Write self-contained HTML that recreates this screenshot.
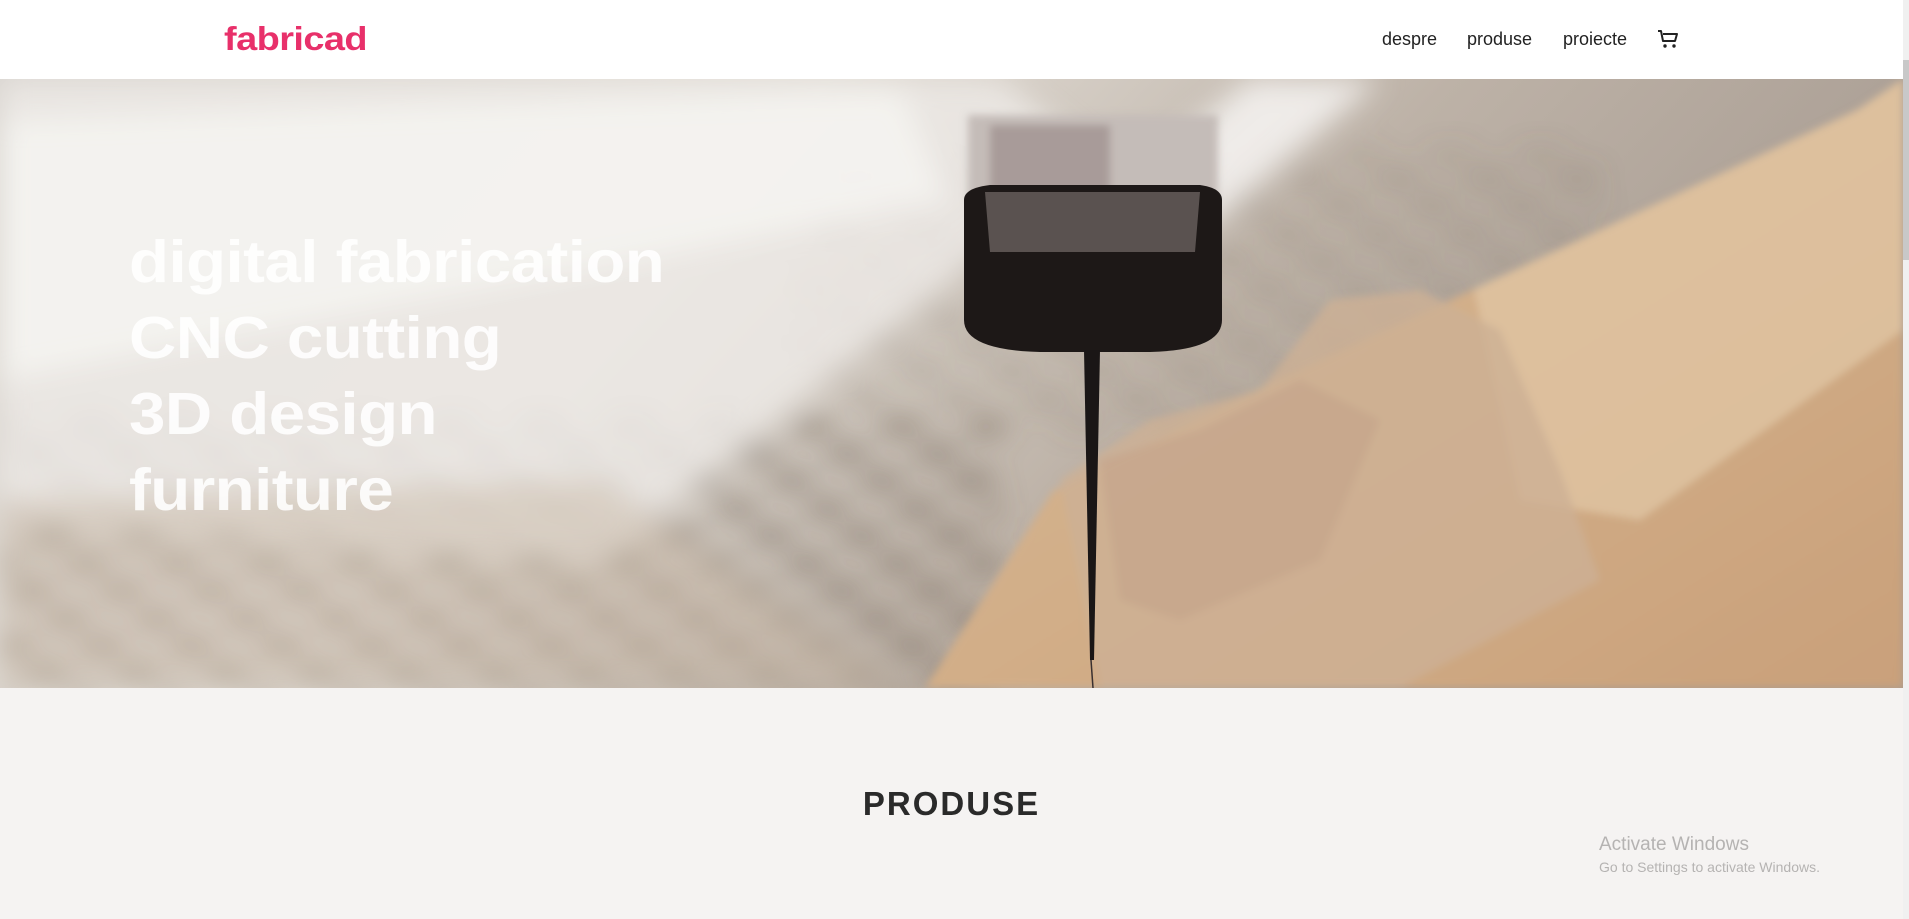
<!DOCTYPE html>
<html><head><meta charset="utf-8"><style>
html,body{margin:0;padding:0;width:1909px;height:919px;overflow:hidden;background:#f5f3f2;font-family:"Liberation Sans",sans-serif}
.hdr{position:absolute;left:0;top:0;width:1903px;height:79px;background:#fff}
.logo{position:absolute;left:224px;top:20px;font-size:33px;font-weight:bold;color:#e8306a;letter-spacing:-0.5px;transform:scaleX(1.15);transform-origin:0 0}
.nav{position:absolute;top:29px;font-size:18px;color:#222}
.hero{position:absolute;left:0;top:79px;width:1903px;height:609px;overflow:hidden}
.ht{position:absolute;left:129px;top:145px;font-size:59px;font-weight:bold;color:rgba(255,255,255,0.88);line-height:76px;letter-spacing:-0.5px;transform:scaleX(1.11);transform-origin:0 0}
.sb{position:absolute;right:0;top:0;width:6px;height:919px;background:#f0f0f0}
.sb div{position:absolute;left:0;top:60px;width:6px;height:200px;background:#c8c8c8}
.prod{position:absolute;left:0;width:1903px;top:785px;text-align:center;font-size:33px;font-weight:bold;color:#2a2a2a;letter-spacing:2px}
.win{position:absolute;left:1599px;top:834px;color:#b5b3b2;font-size:19px}
.win2{position:absolute;left:1599px;top:859px;color:#b5b3b2;font-size:14px}
</style></head><body>
<div class="hdr">
<div class="logo">fabricad</div>
<div class="nav" style="left:1382px">despre</div>
<div class="nav" style="left:1467px">produse</div>
<div class="nav" style="left:1563px">proiecte</div>
<svg style="position:absolute;left:1657px;top:29px" width="22" height="20" viewBox="0 0 22 20"><path d="M1 2h3l2 10h12l2-7H6" fill="none" stroke="#222" stroke-width="2" stroke-linejoin="round"/><circle cx="8" cy="17" r="1.7" fill="#222"/><circle cx="17" cy="17" r="1.7" fill="#222"/></svg>
</div>
<div class="hero">
<svg width="1903" height="609" viewBox="0 79 1903 609" style="position:absolute;left:0;top:0">
<defs>
<filter id="b" x="-20%" y="-20%" width="140%" height="140%"><feGaussianBlur stdDeviation="14"/></filter>
<filter id="b2"><feGaussianBlur stdDeviation="4"/></filter>
<linearGradient id="bg" x1="0" y1="0" x2="1" y2="0.3"><stop offset="0" stop-color="#d9d5d0"/><stop offset="0.4" stop-color="#e2ddd6"/><stop offset="0.7" stop-color="#bdb2a7"/><stop offset="1" stop-color="#a89c92"/></linearGradient>
<linearGradient id="wood" x1="0" y1="0" x2="1" y2="1"><stop offset="0" stop-color="#d6b896"/><stop offset="0.5" stop-color="#d2ae88"/><stop offset="1" stop-color="#c9a07a"/></linearGradient>
<pattern id="chk" width="90" height="55" patternUnits="userSpaceOnUse" patternTransform="skewX(-20)"><ellipse cx="22" cy="14" rx="24" ry="12" fill="#6d5f52"/><ellipse cx="67" cy="41" rx="24" ry="12" fill="#6d5f52"/></pattern>
</defs>
<rect x="0" y="79" width="1903" height="609" fill="url(#bg)"/>
<g filter="url(#b)">
<rect x="0" y="420" width="1000" height="280" fill="url(#chk)" opacity="0.5"/>
<rect x="800" y="150" width="800" height="280" fill="url(#chk)" opacity="0.2"/>
<polygon points="0,79 1000,79 1100,160 600,560 0,520" fill="#ece9e5" opacity="0.85"/>
<polygon points="0,120 900,90 950,200 0,380" fill="#f6f5f3" opacity="0.8"/>
<polygon points="1250,79 1060,240 1180,250 1380,79" fill="#f3f1ee" opacity="0.9"/>
<polygon points="0,500 600,480 900,688 0,688" fill="#c9b9a8" opacity="0.5"/>
</g>
<g filter="url(#b2)">
<polygon points="925,688 1053,491 1257,390 1474,289 1857,110 1903,79 1903,688" fill="url(#wood)"/>
<polygon points="1474,289 1857,110 1903,79 1903,330 1640,520 1520,500" fill="#e0c4a2" opacity="0.8"/>
<polygon points="1060,480 1150,420 1260,390 1330,300 1420,290 1500,330 1560,470 1600,580 1400,688 1100,688" fill="#cdb095" opacity="0.8"/>
<polygon points="1100,460 1200,430 1300,380 1380,420 1320,560 1180,620 1120,600" fill="#c4a48a" opacity="0.6"/>
</g>
<g filter="url(#b2)">
<rect x="968" y="115" width="250" height="85" fill="#c4bcb8"/>
<rect x="990" y="125" width="120" height="70" fill="#8c7a7a" opacity="0.5"/>
</g>
<path d="M964,200 Q964,188 990,185 L1200,185 Q1222,188 1222,200 L1222,320 Q1222,350 1150,352 L1040,352 Q964,350 964,320 Z" fill="#1d1817"/>
<path d="M985,192 L1200,192 L1195,252 L990,252 Z" fill="#6a625f" opacity="0.8"/>
<path d="M1084,350 L1100,350 L1094,660 L1090,660 Z" fill="#1a1616"/>
<line x1="1091" y1="660" x2="1093" y2="688" stroke="#3a3030" stroke-width="1.5"/>
</svg>
<div class="ht">digital fabrication<br>CNC cutting<br>3D design<br>furniture</div>
</div>
<div class="prod">PRODUSE</div>
<div class="win">Activate Windows</div>
<div class="win2">Go to Settings to activate Windows.</div>
<div class="sb"><div></div></div>
</body></html>
